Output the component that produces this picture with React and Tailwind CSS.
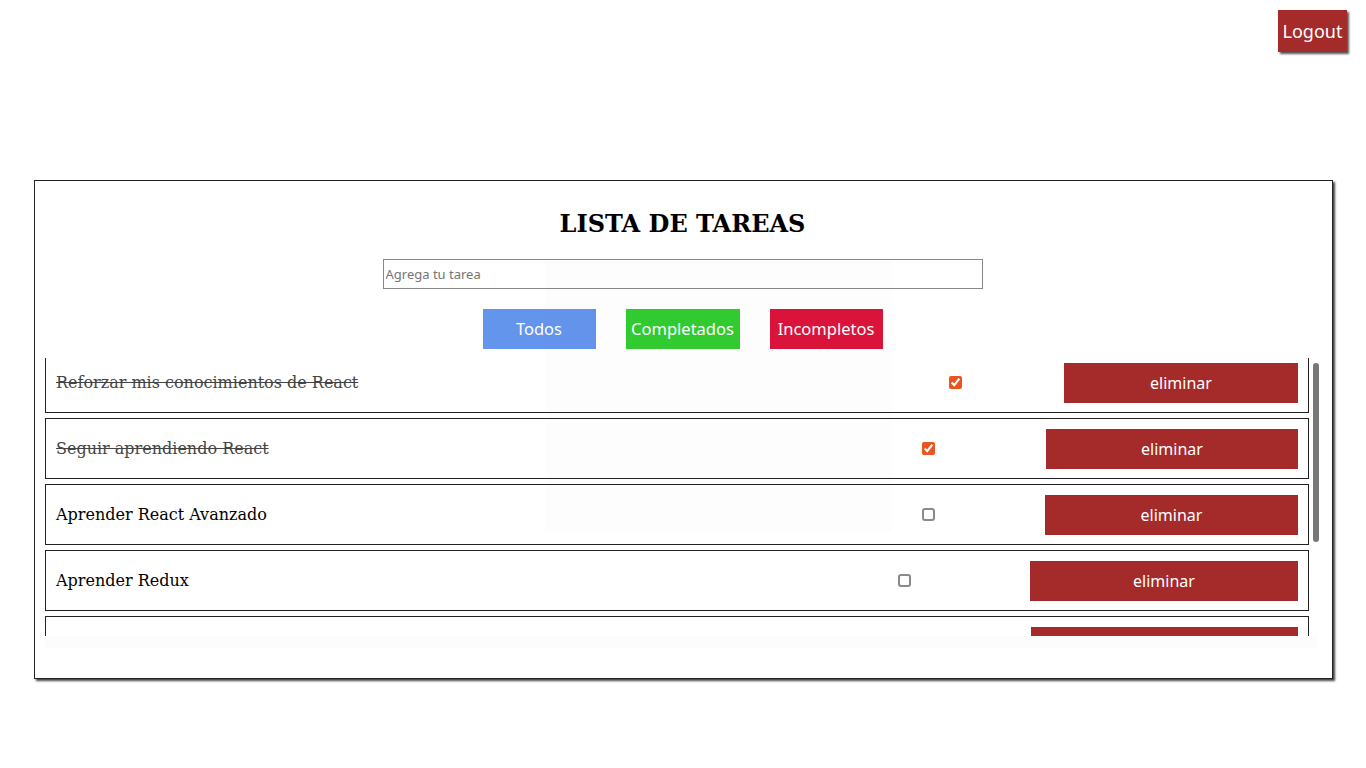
import React from "react";

const sans = { fontFamily: '"Noto Sans", "Open Sans", sans-serif' };

const tasks = [
  { text: "Reforzar mis conocimientos de React", done: true, gap: "mr-[102px]", btn: "w-[234px]" },
  { text: "Seguir aprendiendo React", done: true, gap: "mr-[111px]", btn: "w-[252px]" },
  { text: "Aprender React Avanzado", done: false, gap: "mr-[110px]", btn: "w-[253px]" },
  { text: "Aprender Redux", done: false, gap: "mr-[119px]", btn: "w-[268px]" },
  { text: "Aprender Node", done: false, gap: "mr-[118px]", btn: "w-[267px]" },
];

function Row({ t }) {
  return (
    <div className="flex items-center h-[61px] border border-[#222] mb-[5px] pl-[10px] pr-[10px] bg-white">
      <span
        className={
          "flex-1 text-[16px] " +
          (t.done ? "line-through text-[#444]" : "text-black")
        }
        style={{ fontFamily: '"DejaVu Serif", serif' }}
      >
        {t.text}
      </span>
      {t.done ? (
        <input
          type="checkbox"
          defaultChecked
          className={"m-0 w-[13px] h-[13px] accent-[#e95420] " + t.gap}
        />
      ) : (
        <input
          type="checkbox"
          className={
            "m-0 w-[13px] h-[13px] appearance-none border-2 border-[#8a8a8a] rounded-[3px] bg-white " +
            t.gap
          }
        />
      )}
      <button
        className={"h-[40px] bg-[#a52a2a] text-white text-[16px] " + t.btn}
        style={sans}
      >
        eliminar
      </button>
    </div>
  );
}

export default function App() {
  return (
    <div className="w-[1366px] h-[768px] bg-white relative overflow-hidden">
      <div className="flex justify-end pt-[10px] pr-[19px]">
        <button
          className="h-[42px] w-[69px] bg-[#a52a2a] text-white text-[18px] shadow-[2px_2px_2px_#555]"
          style={sans}
        >
          Logout
        </button>
      </div>
      <div className="mt-[128px] ml-[34px] w-[1299px] border border-[#222] shadow-[2px_2px_2px_#444] bg-white pt-[29px] pb-[30px] pl-[10px] pr-[12px] relative">
        <h1
          className="text-center text-[24px] leading-[28px] font-bold text-black"
          style={{ fontFamily: '"DejaVu Serif", serif' }}
        >
          LISTA DE TAREAS
        </h1>
        <div className="flex justify-center mt-[21px]">
          <input
            type="text"
            placeholder="Agrega tu tarea"
            className="w-[600px] h-[30px] border border-[#888] px-[2px] text-[13px] placeholder:text-[#757575] outline-none"
            style={sans}
          />
        </div>
        <div className="flex justify-center gap-[30px] mt-[20px]" style={sans}>
          <button className="w-[113px] h-[40px] bg-[#6495ed] text-white text-[16.5px]">Todos</button>
          <button className="w-[114px] h-[40px] bg-[#32cd32] text-white text-[16.5px]">Completados</button>
          <button className="w-[113px] h-[40px] bg-[#dc143c] text-white text-[16.5px]">Incompletos</button>
        </div>
        <div className="flex mt-[9px] h-[278px]">
          <div className="w-[1264px] overflow-hidden">
            <div className="-mt-[6px]">
              {tasks.map((t, i) => (
                <Row key={i} t={t} />
              ))}
            </div>
          </div>
          <div className="flex-1 pl-[4px] pt-[5px]">
            <div className="w-[6px] h-[179px] rounded-full bg-[#777]"></div>
          </div>
        </div>
        <div className="h-[12px] bg-[#fcfcfc] w-[1273px]"></div>
        <div className="absolute left-[510px] top-[79px] w-[347px] h-[271px] bg-black/[0.008] pointer-events-none"></div>
      </div>
    </div>
  );
}
